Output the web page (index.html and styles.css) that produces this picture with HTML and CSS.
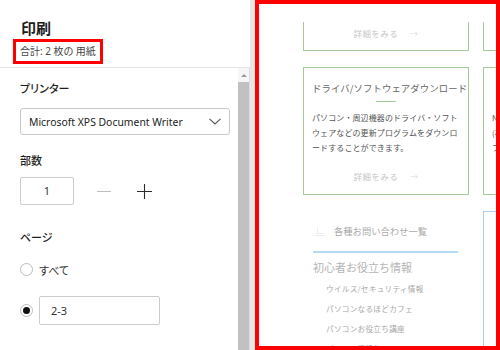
FILE: index.html
```html
<!DOCTYPE html>
<html lang="ja">
<head>
    <meta charset="UTF-8">
    <meta name="viewport" content="width=device-width, initial-scale=1.0">
    <title>印刷</title>
    <link rel="stylesheet" href="styles.css">
</head>
<body>
    <div class="window">
        <!-- print settings panel -->
        <div class="panel">
            <div class="panel-head">
                <h1 class="title">印刷</h1>
                <div class="sheets">合計: 2 枚の 用紙</div>
            </div>
            <div class="panel-body">
                <div class="options">
                    <div class="label printer-label">プリンター</div>
                    <div class="select">
                        <span>Microsoft XPS Document Writer</span>
                        <svg class="chevron" width="12" height="7" viewBox="0 0 12 7">
                            <path d="M0.5 0.8 L6 6 L11.5 0.8" fill="none" stroke="#555" stroke-width="1.1"/>
                        </svg>
                    </div>

                    <div class="label copies-label">部数</div>
                    <div class="copies">
                        <div class="field count">1</div>
                        <svg class="step minus" width="14" height="14" viewBox="0 0 14 14">
                            <path d="M0 7.5 H14" stroke="#bdbdbd" stroke-width="1"/>
                        </svg>
                        <svg class="step plus" width="15" height="15" viewBox="0 0 15 15">
                            <path d="M0 7.5 H15 M7.5 0 V15" stroke="#2b2b2b" stroke-width="1.1"/>
                        </svg>
                    </div>

                    <div class="label pages-label">ページ</div>
                    <div class="radio-row all">
                        <span class="radio"></span>
                        <span>すべて</span>
                    </div>
                    <div class="radio-row range">
                        <span class="radio checked"></span>
                        <div class="field range-input">2-3</div>
                    </div>
                </div>
                <div class="scrollbar">
                    <div class="arrow"></div>
                    <div class="thumb"></div>
                </div>
            </div>
        </div>

        <!-- page preview -->
        <div class="preview">
            <div class="page">
                <div class="card cut">
                    <div class="more">詳細をみる<span class="arrow-r">→</span></div>
                </div>
                <div class="card cut"></div>

                <div class="card">
                    <div class="card-title">ドライバ/ソフトウェアダウンロード</div>
                    <div class="card-rule"></div>
                    <p class="card-text">パソコン・周辺機器のドライバ・ソフト<br>ウェアなどの更新プログラムをダウンロ<br>ードすることができます。</p>
                    <div class="more">詳細をみる<span class="arrow-r">→</span></div>
                </div>
                <div class="card">
                    <div class="card-title">&nbsp;</div>
                    <div class="card-rule hidden"></div>
                    <p class="card-text">NECパーソナル<br>(株)の製品情報<br>ファイル</p>
                </div>

                <div class="links">
                    <div class="contact">
                        <svg class="contact-icon" width="11" height="9" viewBox="0 0 11 9">
                            <path d="M0.5 8.5 H10.5 M2.5 0.5 V6.5 H8.5" fill="none" stroke="#ececec" stroke-width="1"/>
                        </svg>
                        <span>各種お問い合わせ一覧</span>
                    </div>
                    <div class="blue-rule"></div>
                    <div class="beginner">初心者お役立ち情報</div>
                    <ul class="beginner-list">
                        <li>ウイルス/セキュリティ情報</li>
                        <li>パソコンなるほどカフェ</li>
                        <li>パソコンお役立ち講座</li>
                        <li>パソコン用語集</li>
                    </ul>
                </div>
                <div class="blue-box"></div>
            </div>
        </div>
    </div>
</body>
</html>
```

FILE: styles.css
```css
/* General */
* {
    box-sizing: border-box;
}

body {
    margin: 0;
    font-family: "Noto Sans", "Noto Sans CJK JP", sans-serif;
    background: #ffffff;
}

.window {
    display: flex;
    width: 500px;
    height: 350px;
    background: #e7e7e7;
    overflow: hidden;
}

/* Left panel */
.panel {
    width: 250px;
    height: 350px;
    display: flex;
    flex-direction: column;
    background: #ffffff;
}

.panel-head {
    height: 68px;
    padding: 18px 0 0 13px;
    border-bottom: 1px solid #e4e4e4;
}

.title {
    margin: 0 0 0 8px;
    font-family: "Noto Sans CJK JP", sans-serif;
    font-size: 15px;
    line-height: 20px;
    font-weight: bold;
    color: #1d1d1d;
}

.sheets {
    display: inline-block;
    margin-top: -1px;
    padding: 0 4px;
    height: 25px;
    line-height: 19px;
    border: 3px solid #ff0000;
    font-size: 10px;
    color: #444444;
    font-feature-settings: "palt";
}

.panel-body {
    flex: 1;
    display: flex;
}

.options {
    flex: 1;
    padding: 0 8px 0 20px;
}

.label {
    font-family: "Noto Sans CJK JP", sans-serif;
    font-size: 11px;
    line-height: 16px;
    font-weight: 500;
    color: #1f1f1f;
    font-feature-settings: "palt";
}

.printer-label {
    margin-top: 12px;
}

.select {
    display: flex;
    align-items: center;
    justify-content: space-between;
    margin-top: 12px;
    height: 27px;
    padding: 0 8px 0 8px;
    border: 1px solid #c9c9c9;
    border-radius: 3px;
    font-size: 10.4px;
    color: #222222;
}

.copies-label {
    margin-top: 17px;
}

.copies {
    display: flex;
    align-items: center;
    margin-top: 9px;
}

.field {
    height: 28px;
    border: 1px solid #cccccc;
    border-radius: 2px;
    font-size: 11px;
    line-height: 26px;
    color: #333333;
}

.count {
    width: 54px;
    text-align: center;
}

.minus {
    margin-left: 23px;
}

.plus {
    margin-left: 26px;
}

.pages-label {
    margin-top: 24px;
}

.radio-row {
    display: flex;
    align-items: center;
    font-family: "Noto Sans CJK JP", sans-serif;
    font-size: 11px;
    color: #333333;
    font-feature-settings: "palt";
}

.all {
    margin-top: 18px;
    height: 13px;
}

.range {
    margin-top: 20px;
}

.radio {
    width: 13px;
    height: 13px;
    margin-right: 6px;
    border: 1px solid #bdbdbd;
    border-radius: 50%;
    display: flex;
    align-items: center;
    justify-content: center;
}

.radio.checked::after {
    content: "";
    width: 7px;
    height: 7px;
    border-radius: 50%;
    background: #111111;
}

.range-input {
    width: 121px;
    height: 29px;
    padding-left: 11px;
    line-height: 27px;
    font-family: "Noto Sans", sans-serif;
}

/* Scrollbar */
.scrollbar {
    width: 12px;
    display: flex;
    flex-direction: column;
    background: #f6f6f6;
    border-right: 1px solid #dedede;
}

.arrow {
    height: 14px;
    display: flex;
    align-items: center;
    justify-content: center;
}

.arrow::before {
    content: "";
    border-left: 3px solid transparent;
    border-right: 3px solid transparent;
    border-bottom: 3px solid #9a9a9a;
}

.thumb {
    flex: 1;
    background: #c1c1c1;
}

/* Preview */
.preview {
    width: 245px;
    height: 350px;
    margin-left: 5px;
    border: 4px solid #ff0000;
    background: #ffffff;
    overflow: hidden;
}

.page {
    display: grid;
    grid-template-columns: 166px 166px;
    column-gap: 14px;
    row-gap: 16px;
    padding: 18px 0 0 44px;
    font-family: "Noto Sans CJK JP", sans-serif;
}

.card {
    height: 128px;
    padding: 12px 8px 0 8px;
    border: 1px solid #a4cc9b;
}

.card.cut {
    height: 29px;
    padding: 4px 0 0 0;
    border-top: none;
}

.card-title {
    font-size: 9.4px;
    line-height: 16px;
    color: #666666;
    text-align: center;
    letter-spacing: 0.1px;
    white-space: nowrap;
}

.card-rule {
    width: 20px;
    height: 1px;
    margin: 5px auto 0;
    background: #a4cc9b;
}

.card-rule.hidden {
    background: none;
}

.card-text {
    margin: 8px 0 0;
    font-size: 8px;
    line-height: 15px;
    letter-spacing: 0.1px;
    color: #555555;
    white-space: nowrap;
}

.more {
    font-size: 8.5px;
    line-height: 14px;
    color: #c6c6c6;
    text-align: center;
    letter-spacing: 0.4px;
}

.card .card-text + .more {
    margin-top: 14px;
}

.arrow-r {
    margin-left: 12px;
    font-size: 8px;
    color: #dddddd;
}

.links {
    padding-left: 10px;
}

.contact {
    display: flex;
    align-items: center;
    margin-top: 13px;
    height: 14px;
    font-size: 9.3px;
    color: #aaaaaa;
}

.contact-icon {
    margin: 0 8px 0 2px;
}

.blue-rule {
    width: 145px;
    height: 2px;
    margin-top: 13px;
    background: #b3d9f3;
}

.beginner {
    margin-top: 6px;
    font-size: 11px;
    line-height: 16px;
    color: #b4b4b4;
}

.beginner-list {
    list-style: none;
    margin: 4px 0 0;
    padding-left: 13px;
}

.beginner-list li {
    font-size: 7.6px;
    line-height: 20px;
    letter-spacing: 0.3px;
    color: #a8a8a8;
}

.blue-box {
    height: 200px;
    border: 1px solid #a9cdef;
}
```
